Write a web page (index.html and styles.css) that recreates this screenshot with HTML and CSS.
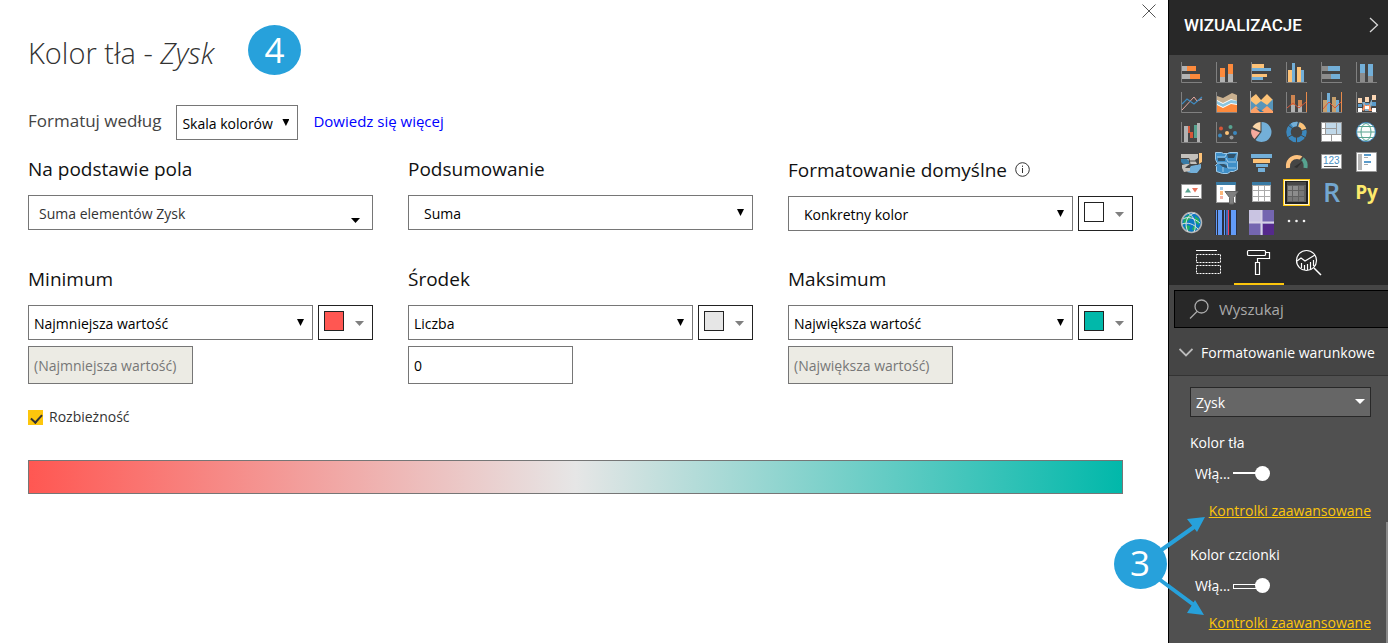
FILE: index.html
```html
<!DOCTYPE html>
<html lang="pl">
<head>
    <meta charset="UTF-8">
    <meta name="viewport" content="width=device-width, initial-scale=1">
    <title>Kolor tła - Zysk</title>
    <link rel="stylesheet" href="styles.css">
</head>
<body>
    <main class="dialog">
        <button class="close" aria-label="Zamknij">
            <svg width="14" height="14" viewBox="0 0 14 14"><path d="M0.5 0.5l13 13M13.5 0.5l-13 13" stroke="#555" fill="none"/></svg>
        </button>

        <div class="title-row">
            <h1>Kolor tła - <em>Zysk</em></h1>
            <span class="badge">4</span>
        </div>

        <div class="format-row">
            <label for="formatBy">Formatuj według</label>
            <div class="select">
                <select id="formatBy"><option>Skala kolorów</option></select>
            </div>
            <a href="#">Dowiedz się więcej</a>
        </div>

        <div class="fields">
            <div class="field">
                <label for="basedOn">Na podstawie pola</label>
                <div class="control">
                    <div class="select field-select">
                        <select id="basedOn"><option>Suma elementów Zysk</option></select>
                    </div>
                </div>
            </div>
            <div class="field">
                <label for="summary">Podsumowanie</label>
                <div class="control">
                    <div class="select indent">
                        <select id="summary"><option>Suma</option></select>
                    </div>
                </div>
            </div>
            <div class="field">
                <div class="label-row">
                    <label for="defaultFormat">Formatowanie domyślne</label>
                    <svg width="15" height="15" viewBox="0 0 15 15"><circle cx="7.5" cy="7.5" r="6.8" fill="none" stroke="#333"/><path d="M7.5 6v5M7.5 3.6v1.3" stroke="#333"/></svg>
                </div>
                <div class="control">
                    <div class="select indent">
                        <select id="defaultFormat"><option>Konkretny kolor</option></select>
                    </div>
                    <button class="color" aria-label="Kolor domyślny"><span class="swatch white"></span></button>
                </div>
            </div>

            <div class="field">
                <label for="minType">Minimum</label>
                <div class="control">
                    <div class="select">
                        <select id="minType"><option>Najmniejsza wartość</option></select>
                    </div>
                    <button class="color" aria-label="Kolor minimum"><span class="swatch red"></span></button>
                </div>
                <input class="value" type="text" aria-label="Wartość minimum" value="(Najmniejsza wartość)" disabled>
            </div>
            <div class="field">
                <label for="midType">Środek</label>
                <div class="control">
                    <div class="select">
                        <select id="midType"><option>Liczba</option></select>
                    </div>
                    <button class="color" aria-label="Kolor środka"><span class="swatch grey"></span></button>
                </div>
                <input class="value" type="text" aria-label="Wartość środka" value="0">
            </div>
            <div class="field">
                <label for="maxType">Maksimum</label>
                <div class="control">
                    <div class="select">
                        <select id="maxType"><option>Największa wartość</option></select>
                    </div>
                    <button class="color" aria-label="Kolor maksimum"><span class="swatch teal"></span></button>
                </div>
                <input class="value" type="text" aria-label="Wartość maksimum" value="(Największa wartość)" disabled>
            </div>
        </div>

        <label class="diverging"><input type="checkbox" checked> Rozbieżność</label>

        <div class="gradient"></div>
    </main>

    <aside class="panel">
        <header class="panel-header">
            <h2>WIZUALIZACJE</h2>
            <button aria-label="Zwiń">
                <svg width="10" height="16" viewBox="0 0 10 16"><path d="M1 1l7.5 7L1 15" fill="none" stroke="#d8d8d8" stroke-width="1.3"/></svg>
            </button>
        </header>

        <div class="visuals">
            <!-- row 1: bar and column charts -->
            <button aria-label="Skumulowany wykres słupkowy"><svg viewBox="0 0 35 30"><path d="M7.5 5v20.5H28" fill="none" stroke="#808080"/><path d="M8 9h5v5H8zM8 17h8v5H8z" fill="#b3b3b3"/><path d="M13 9h9v5h-9zM16 17h10v5H16z" fill="#fd8a3c"/></svg></button>
            <button aria-label="Skumulowany wykres kolumnowy"><svg viewBox="0 0 35 30"><path d="M7.5 5v20.5H28" fill="none" stroke="#808080"/><path d="M11 20h5v5h-5zM19 17h5v8h-5z" fill="#b3b3b3"/><path d="M11 11h5v9h-5zM19 7h5v10h-5z" fill="#fd8a3c"/></svg></button>
            <button aria-label="Grupowany wykres słupkowy"><svg viewBox="0 0 35 30"><path d="M7.5 5v20.5H28" fill="none" stroke="#808080"/><path d="M8 7h12v4H8zM8 17h15v3H8z" fill="#fdc277"/><path d="M8 11h19v3H8zM8 20h11v3H8z" fill="#73afd8"/></svg></button>
            <button aria-label="Grupowany wykres kolumnowy"><svg viewBox="0 0 35 30"><path d="M7.5 5v20.5H28" fill="none" stroke="#808080"/><path d="M9 13h4v12H9zM18 10h4v15h-4z" fill="#fdc277"/><path d="M13 6h3v19h-3zM22 13h3v12h-3z" fill="#73afd8"/></svg></button>
            <button aria-label="Wykres słupkowy 100%"><svg viewBox="0 0 35 30"><path d="M7.5 5v20.5H28" fill="none" stroke="#808080"/><path d="M8 9h6v5H8zM8 17h9v5H8z" fill="#8c8c8c"/><path d="M14 9h12v5H14zM17 17h9v5h-9z" fill="#73afd8"/></svg></button>
            <button aria-label="Wykres kolumnowy 100%"><svg viewBox="0 0 35 30"><path d="M7.5 5v20.5H28" fill="none" stroke="#808080"/><path d="M11 16h5v9h-5zM19 19h5v6h-5z" fill="#8c8c8c"/><path d="M11 7h5v9h-5zM19 7h5v12h-5z" fill="#73afd8"/></svg></button>

            <!-- row 2: line, area and combo charts -->
            <button aria-label="Wykres liniowy"><svg viewBox="0 0 35 30"><path d="M7.5 5v20.5H28" fill="none" stroke="#808080"/><path d="M8 23l12-13 3 4 5-2" fill="none" stroke="#e8aaa2"/><path d="M8 17l5-5 7 5 8-7" fill="none" stroke="#3f8ac0" stroke-width="1.2"/></svg></button>
            <button aria-label="Wykres warstwowy"><svg viewBox="0 0 35 30"><path d="M7.5 5v20.5H28" fill="none" stroke="#808080"/><path d="M8 9l6 2 9-5 5 2v17H8z" fill="#c9b08f"/><path d="M8 13l6 3 8-4 6 2v10H8z" fill="#fff"/><path d="M8 14l6 3 8-4 6 1v11H8z" fill="#8cc5de"/><path d="M8 17l6 3 8-4 6 1v8H8z" fill="#fff"/><path d="M8 18l6 3 8-4 6 1v7H8z" fill="#fd8a3c"/></svg></button>
            <button aria-label="Wykres warstwowy skumulowany"><svg viewBox="0 0 35 30"><path d="M6.5 4v21.5H29" fill="none" stroke="#aaa"/><path d="M7 11l5-4 5 6 6-6 6 6v9H7z" fill="#fdc277"/><path d="M7 14l5 4 5-4 6 4 6-6v11l-3 2H7z" fill="#5795ba"/><path d="M7 23l5-4 5 5 6-5 6 5v2H7z" fill="#fda066"/><path d="M12 21l4 4h4l-3-2z" fill="#2f78a8"/></svg></button>
            <button aria-label="Wykres liniowy i skumulowany"><svg viewBox="0 0 35 30"><path d="M7.5 5v20.5H28" fill="none" stroke="#808080"/><path d="M12 8h4v10h-4zM19 13h4v6h-4z" fill="#ce8551"/><path d="M12 18h4v7h-4zM19 19h4v6h-4z" fill="#b3b3b3"/><path d="M8 21l6-5 6 5 7-6" fill="none" stroke="#d65638"/><path d="M27.5 5v20" stroke="#e88a4a"/></svg></button>
            <button aria-label="Wykres liniowy i grupowany"><svg viewBox="0 0 35 30"><path d="M7.5 5v20.5H28" fill="none" stroke="#808080"/><path d="M9 13h4v12H9zM18 10h4v15h-4z" fill="#c8a06c"/><path d="M13 6h3v19h-3zM22 13h3v12h-3z" fill="#73afd8"/><path d="M9 22l6-7 6 6 6-6" fill="none" stroke="#d65638"/><path d="M27.5 5v20" stroke="#e88a4a"/></svg></button>
            <button aria-label="Wykres wstążkowy"><svg viewBox="0 0 35 30"><path d="M7.5 5v20.5H28" fill="none" stroke="#808080"/><path d="M13 15h3l3 9h-3zM20 24l-3-1 6-11v6z" fill="#84aeca"/><path d="M13 23l3-7h4l3 8h-3l-3-6-2 6z" fill="#fd9766"/><path d="M9 11h4v5H9zM16 10h4v5h-4zM23 8h4v5h-4z" fill="#fbd6b4"/><path d="M9 21h4v4H9zM16 19h4v3h-4zM23 21h4v4h-4z" fill="#fff"/><path d="M9 17h4v3H9zM16 16h4v2h-4zM23 15h4v4h-4z" fill="#5a9bcb"/></svg></button>

            <!-- row 3: waterfall, scatter, pie, donut, treemap, map -->
            <button aria-label="Wykres kaskadowy"><svg viewBox="0 0 35 30"><path d="M7.5 5v20.5H28" fill="none" stroke="#808080"/><path d="M10 9h4v16h-4zM23 6h3v19h-3z" fill="#b3b3b3"/><path d="M14 9h2v7h-2zM16 15h3v6h-3z" fill="#d65638"/><path d="M20 8h3v13h-3z" fill="#57a390"/></svg></button>
            <button aria-label="Wykres punktowy"><svg viewBox="0 0 35 30"><path d="M7.5 5v20.5H28" fill="none" stroke="#808080"/><circle cx="12" cy="11.500" r="2" fill="#d65638"/><circle cx="21.500" cy="10" r="2" fill="#57a390"/><circle cx="18" cy="16" r="2" fill="#fdc277"/><circle cx="11" cy="18.500" r="2" fill="#3b87bd"/><circle cx="26" cy="16" r="2" fill="#3b87bd"/><circle cx="22.500" cy="20.500" r="2" fill="#999"/></svg></button>
            <button aria-label="Wykres kołowy"><svg viewBox="0 0 35 30"><path d="M17.5 15V5a10 10 0 1 1-6 18z" fill="#73afd8"/><path d="M16.5 14V5a10 10 0 0 0-8 5z" fill="#fbd6a8"/><path d="M16 15.5L7.5 12a10 10 0 0 0 3 10z" fill="#f5a99d"/></svg></button>
            <button aria-label="Wykres pierścieniowy"><svg viewBox="0 0 35 30"><g fill="none" stroke-width="4.500"><circle cx="17.500" cy="15" r="8" stroke="#3b87bd"/><path d="M13 8.400a8 8 0 0 1 6-1.300" stroke="#73afd8"/><path d="M20 7.400a8 8 0 0 1 5.200 5.400" stroke="#fdc277"/></g><path d="M20 3l-2 7M28 12l-7 2M27 21l-5-3M17.500 26v-6M8 21l5-3M9 8l5 4" stroke="#454545"/></svg></button>
            <button aria-label="Mapa drzewa"><svg viewBox="0 0 35 30"><path d="M7 5h21v20H7z" fill="#999"/><path d="M8 6h3v5H8zM8 12h3v5H8zM8 18h9v6H8zM18 18h9v6h-9z" fill="#fff"/><path d="M12 6h10v5H12zM12 12h10v5H12zM23 6h4v11h-4z" fill="#c0d8e9"/></svg></button>
            <button aria-label="Mapa"><svg viewBox="0 0 35 30"><circle cx="17" cy="15" r="9.500" fill="#fbfdfc" stroke="#3b87bd"/><g fill="none" stroke="#57a390"><ellipse cx="17" cy="15" rx="5" ry="8.500"/><path d="M8 15h18M10 9.500h14M10 20.500h14"/></g></svg></button>

            <!-- row 4: filled map, shape map, funnel, gauge, card, multi-row card -->
            <button aria-label="Kartogram"><svg viewBox="0 0 35 30"><path d="M7 7h17v4l-3 2 2 4h-7l-3 2-2 2H8v-3l4-1-5-4z" fill="#c3c0bb"/><path d="M7 12h6l2 2v3H9l-2-2z" fill="#397ba5"/><path d="M17 19l10-2v4l-4 5h-6l-4-1z" fill="#73afd8"/><path d="M8 21h8v3l-6 1z" fill="#c3c0bb"/><path d="M25 6h3v9l-3 2z" fill="#fdc277"/><path d="M7 11.500h8l1 6h8M15 14h8" stroke="#454545" fill="none"/></svg></button>
            <button aria-label="Mapa kształtów"><svg viewBox="0 0 35 30"><path d="M6.500 5.500h6l2 1h4l2-1h8l-1 8 1 1v8l-4 2h-3l-3 2h-5l-6-2v-5l-1-1 2-2-2-4z" fill="#3f8fc8" stroke="#a2cbe8"/><path d="M9 11h7v3H9zM18 7h9l-2 4h-6zM10 17h5l3 2v2l-4-1z" fill="#32536b"/><path d="M8 10h8l2-4M17 11l2 4h8M9 16h9l1 5h8M14 20v5" fill="none" stroke="#a2cbe8"/></svg></button>
            <button aria-label="Lejek"><svg viewBox="0 0 35 30"><path d="M7 7h21v4H7zM12 17h12v3H12zM14 21h7v4h-7z" fill="#73afd8"/><path d="M9 12h17v4H9z" fill="#fdc277"/></svg></button>
            <button aria-label="Miernik"><svg viewBox="0 0 35 30"><g fill="none" stroke-width="4"><path d="M9 21c-1-7 4-11 9-11 2 0 3 0 4 1" stroke="#fdc27f"/><path d="M23.500 12c3 2 3.500 5 3 9" stroke="#57a390"/></g><path d="M15 20l9-6-6 7z" fill="#303030"/></svg></button>
            <button aria-label="Karta"><svg viewBox="0 0 35 30"><path d="M7.5 7.5h20v14h-20z" fill="#fff" stroke="#999"/><text x="9" y="17" font-family="Liberation Sans, sans-serif" font-size="10" fill="#4a90c2">123</text><path d="M10 19.5h14" stroke="#555"/></svg></button>
            <button aria-label="Karta z wieloma wierszami"><svg viewBox="0 0 35 30"><path d="M7.5 5.5h20v19h-20z" fill="#fff" stroke="#999"/><path d="M9 7h4v16H9z" fill="#b5b5b5"/><path d="M15 7h7v2h-7zM15 14h7v2h-7z" fill="#5a9bcb"/><path d="M15 10.5h4M15 17.5h4" stroke="#aaa"/></svg></button>

            <!-- row 5: KPI, slicer, table, matrix, R, Python -->
            <button aria-label="Kluczowy wskaźnik wydajności"><svg viewBox="0 0 35 30"><path d="M7.5 7.5h20v14h-20z" fill="#fff" stroke="#999"/><path d="M11 15.500l3-4.500 3 4.500z" fill="#57a390"/><path d="M18 11h6l-3 4.500z" fill="#e8735c"/><path d="M10 19.5h15" stroke="#777"/></svg></button>
            <button aria-label="Fragmentator"><svg viewBox="0 0 35 30"><path d="M7 5h20v21H7z" fill="#999"/><path d="M8 8h18v17H8z" fill="#fff"/><path d="M7 5h20v3H7z" fill="#397ba5"/><path d="M11 10h3v3h-3z" fill="#a7cbe4"/><path d="M11 14h3v4h-3z" fill="#fdb87a"/><path d="M11 19h3v3h-3z" fill="#f5b5a8"/><path d="M16 14.500h13l-4.500 6V27h-4v-6.500z" fill="#808080" stroke="#666"/></svg></button>
            <button aria-label="Tabela"><svg viewBox="0 0 35 30"><path d="M8 5h19v20H8z" fill="#aaa"/><path d="M8 5h19v3H8z" fill="#397ba5"/><path d="M9 9h5v4H9zM15 9h5v4h-5zM21 9h5v4h-5zM9 14h5v5H9zM15 14h5v5h-5zM21 14h5v5h-5zM9 20h5v4H9zM15 20h5v4h-5zM21 20h5v4h-5z" fill="#fff"/></svg></button>
            <button class="active" aria-label="Macierz"><svg viewBox="0 0 35 30"><path d="M8 5h19v20H8z" fill="#606060"/><path d="M8 5h19v3H8z" fill="#484848"/><path d="M9 9h4v4H9zM9 14h4v5H9zM14 9h5v4h-5zM14 14h5v5h-5z" fill="#8c8c8c"/><path d="M20 9h5v4h-5zM20 14h5v5h-5zM9 20h4v4H9zM14 20h5v4h-5zM20 20h5v4h-5z" fill="#787878"/></svg></button>
            <button class="script-r" aria-label="Wizualizacja skryptu języka R">R</button>
            <button class="script-py" aria-label="Wizualizacja języka Python">Py</button>

            <!-- row 6: custom visuals -->
            <button aria-label="ArcGIS Maps"><svg viewBox="0 0 35 30"><circle cx="17.500" cy="15.500" r="10" fill="#0c78c4" stroke="#b5b5b5" stroke-width="1.500"/><path d="M10 11l6-4 2 3-4 4-5 4zM21 9l4 3v6l-4-3zM12 18l4 1-1 5-4-3zM20 18l3 3-3 3-2-2z" fill="#1fae62"/><g fill="none" stroke="#d7e1e6"><path d="M9 12c5-3 11-1 17 4M8 17c6-2 12 0 16 5M14 6c7 4 9 12 6 19M21 6c-9 2-11 11-7 19"/></g></svg></button>
            <button aria-label="Kod kreskowy"><svg viewBox="0 0 35 30"><path d="M6 3h22v25H6z" fill="#2a2f40"/><path d="M7 3h1v25H7zM9 3h4v25H9zM15 3h1v25h-1zM22 3h5v25h-5z" fill="#629bf8"/><path d="M17 3h2v25h-2z" fill="#4168b5"/><path d="M19 3h1v25h-1z" fill="#f03d5b"/></svg></button>
            <button aria-label="Macierz ćwiartek"><svg viewBox="0 0 35 30"><path d="M5 3h25v25H5z" fill="#7466b0"/><path d="M5 3h12v12H5z" fill="#c9c4e2"/><path d="M19 17h11v11H19z" fill="#552a8c"/><path d="M17.5 3v25M5 15.5h25" stroke="#d6d1e6" stroke-width="2"/></svg></button>
            <button aria-label="Więcej"><svg viewBox="0 0 35 30"><g fill="#f2f2f2"><circle cx="10" cy="14" r="1.300"/><circle cx="17.500" cy="14" r="1.300"/><circle cx="25" cy="14" r="1.300"/></g></svg></button>
        </div>

        <nav class="tabs">
            <button aria-label="Pola"><svg width="50" height="45" viewBox="0 0 50 45"><g fill="none" stroke="#fff"><path d="M12 10.5h21"/><path d="M12.5 14.5h24v8h-24zM12.5 25.5h24v8h-24z" stroke-dasharray="2 1"/></g></svg></button>
            <button class="active" aria-label="Formatowanie"><svg width="50" height="45" viewBox="0 0 50 45"><g fill="none" stroke="#fff" stroke-width="1.200"><rect x="13.500" y="10.500" width="18" height="5" rx="1"/><path d="M32 12.5h3.500v6h-12v4"/><path d="M21.5 22.500h4v12h-4z"/></g></svg></button>
            <button aria-label="Analiza"><svg width="50" height="45" viewBox="0 0 50 45"><g fill="none" stroke="#fff" stroke-width="1.200"><circle cx="22.500" cy="20.500" r="10"/><path d="M30 28l7 7" stroke-width="1.500"/><path d="M13 21l4-3 4 3 10-6"/><path d="M17.5 23v5M20.5 25v5M23.5 24v6M26.5 22v7M29.5 20v6"/></g></svg></button>
        </nav>

        <label class="search">
            <svg width="20" height="20" viewBox="0 0 20 20"><g fill="none" stroke="#aaa" stroke-width="1.300"><circle cx="12.500" cy="7.500" r="6.500"/><path d="M8 12.500L1 19.500"/></g></svg>
            <input type="text" placeholder="Wyszukaj" aria-label="Wyszukaj">
        </label>

        <button class="section">
            <svg width="14" height="9" viewBox="0 0 14 9"><path d="M0.5 1L7 7.500 13.500 1" fill="none" stroke="#bbb" stroke-width="1.800"/></svg>
            Formatowanie warunkowe
        </button>

        <div class="section-body">
            <div class="select series">
                <select aria-label="Pole"><option>Zysk</option></select>
            </div>
            <div class="option">
                <h3>Kolor tła</h3>
                <label class="toggle">Włą...<input type="checkbox" checked></label>
                <a href="#">Kontrolki zaawansowane</a>
            </div>
            <div class="option">
                <h3>Kolor czcionki</h3>
                <label class="toggle hollow">Włą...<input type="checkbox" checked></label>
                <a href="#">Kontrolki zaawansowane</a>
            </div>
            <!-- step marker with an arrow to each link -->
            <svg class="callout" width="92" height="104" viewBox="0 0 92 104">
                <g stroke="#27a1db" stroke-width="4"><path d="M26 51L80 13M26 51L80 91"/></g>
                <path d="M91 3L83 18 73 5zM90 101L73 99 81 86z" fill="#27a1db"/>
                <ellipse cx="26.500" cy="50" rx="26.500" ry="25" fill="#27a1db"/>
                <text x="26" y="62" text-anchor="middle">3</text>
            </svg>
            <div class="scrollbar"></div>
        </div>
    </aside>
</body>
</html>
```

FILE: styles.css
```css
* {
    box-sizing: border-box;
}

body {
    margin: 0;
    min-height: 100vh;
    display: flex;
    background-color: #fff;
    color: #000;
    font-family: "Open Sans", "Noto Sans", sans-serif;
    font-size: 14px;
    overflow-x: hidden;
}

h1, h2, h3 {
    margin: 0;
    font-weight: 400;
}

button {
    padding: 0;
    border: none;
    background: none;
    font-family: inherit;
    cursor: pointer;
}

svg {
    display: block;
}

/* dialog */
.dialog {
    flex: 1;
    min-width: 0;
    position: relative;
    padding: 24px 35px 24px 28px;
}

.close {
    position: absolute;
    top: 4px;
    right: 12px;
}

.title-row {
    display: flex;
    align-items: flex-start;
    gap: 34px;
    height: 81px;
}

h1 {
    font-size: 29px;
    line-height: 58px;
    font-weight: 300;
    color: #333;
}

.badge {
    width: 53px;
    height: 50px;
    margin-top: 1px;
    border-radius: 50%;
    background-color: #27a1db;
    color: #fff;
    font-size: 35px;
    line-height: 49px;
    text-align: center;
}

.format-row {
    display: flex;
    gap: 15px;
    height: 35px;
    line-height: 32px;
}

.format-row label {
    font-size: 17px;
    color: #444;
}

.format-row .select {
    flex: none;
    width: 122px;
}

.format-row a {
    color: #00f;
    font-size: 15px;
    text-decoration: none;
}

/* selects share one arrow drawn by the wrapper */
.select {
    flex: 1;
    min-width: 0;
    position: relative;
}

.select select {
    display: block;
    width: 100%;
    height: 35px;
    padding: 2px 5px 0;
    appearance: none;
    border: 1px solid #767676;
    border-radius: 0;
    background-color: #fff;
    color: #000;
    font-family: inherit;
    font-size: 14px;
}

.select::after {
    content: "";
    position: absolute;
    top: 14px;
    right: 9px;
    width: 7px;
    height: 7px;
    background-color: #000;
    clip-path: polygon(0 0, 100% 0, 50% 100%);
    pointer-events: none;
}

.indent select {
    padding-left: 15px;
}

.field-select select {
    padding-left: 10px;
    color: #333;
}

.field-select::after {
    top: 23px;
    right: 13px;
    width: 9px;
    height: 5px;
}

.fields {
    display: grid;
    grid-template-columns: repeat(3, 1fr);
    gap: 34px 35px;
    padding-top: 15px;
}

.field label {
    display: block;
    font-size: 19px;
    line-height: 28px;
    color: #111;
}

.label-row {
    display: flex;
    align-items: center;
    gap: 8px;
    height: 29px;
}

.control {
    display: flex;
    gap: 5px;
    margin-top: 12px;
}

.color {
    width: 55px;
    height: 35px;
    display: flex;
    align-items: center;
    justify-content: space-between;
    padding: 0 8px 3px 5px;
    border: 1px solid #222;
}

.color::after {
    content: "";
    width: 9px;
    height: 5px;
    margin-top: 5px;
    background-color: #808080;
    clip-path: polygon(0 0, 100% 0, 50% 100%);
}

.swatch {
    width: 20px;
    height: 20px;
    border: 1px solid #222;
}

.white { background-color: #fff; }
.red { background-color: #ff5752; }
.grey { background-color: #e6e6e6; }
.teal { background-color: #01b8aa; }

.value {
    display: block;
    width: 165px;
    height: 38px;
    margin-top: 6px;
    padding: 0 5px;
    border: 1px solid #767676;
    border-radius: 0;
    background-color: #fff;
    font-family: inherit;
    font-size: 14px;
}

.value:disabled {
    background-color: #ecebe4;
    color: #777;
}

.diverging {
    display: flex;
    align-items: center;
    gap: 6px;
    margin-top: 22px;
    line-height: 22px;
    color: #333;
}

.diverging input {
    appearance: none;
    position: relative;
    width: 15px;
    height: 15px;
    margin: 0;
    background-color: #fdc60c;
}

.diverging input:checked::after {
    content: "";
    position: absolute;
    left: 5px;
    top: 2px;
    width: 5px;
    height: 9px;
    border: solid #333;
    border-width: 0 2px 2px 0;
    transform: rotate(42deg);
}

.gradient {
    height: 34px;
    margin: 32px 10px 0 0;
    border: 1px solid #767676;
    background: linear-gradient(to right, #ff5752, #e6e6e6 50%, #01b8aa);
}

/* visualizations panel */
.panel {
    flex: none;
    width: 220px;
    display: flex;
    flex-direction: column;
    border-left: 1px solid #000;
    background-color: #454545;
    color: #fff;
}

.panel-header {
    display: flex;
    align-items: center;
    justify-content: space-between;
    height: 55px;
    padding: 0 9px 6px 15px;
    background-color: #282828;
}

.panel-header h2 {
    font-family: Roboto, sans-serif;
    font-size: 17px;
    font-weight: 500;
}

.visuals {
    display: grid;
    grid-template-columns: repeat(6, 35px);
    grid-auto-rows: 30px;
    height: 185px;
    padding: 2px 0 0 5px;
}

.visuals svg {
    width: 35px;
    height: 30px;
}

.visuals .active {
    justify-self: center;
    align-self: center;
    width: 27px;
    height: 27px;
    display: flex;
    align-items: center;
    justify-content: center;
    border: 1px solid #fdc60c;
    outline: 1px solid #fff3c4;
    outline-offset: -2px;
    background-color: #222;
    overflow: hidden;
}

.visuals .active svg {
    flex: none;
}

.script-r {
    color: #73a7d0;
    font-size: 27px;
    line-height: 30px;
    font-weight: 600;
}

.script-py {
    color: #fdea6c;
    font-size: 19px;
    line-height: 28px;
    font-weight: 700;
}

.tabs {
    display: flex;
    height: 45px;
    padding-left: 15px;
    background-color: #282828;
}

.tabs .active {
    border-bottom: 2px solid #fdc60c;
}

.tabs button {
    height: 45px;
    overflow: hidden;
}

.search {
    display: flex;
    align-items: center;
    gap: 10px;
    height: 38px;
    margin: 5px 0 0 5px;
    padding-left: 14px;
    border: 1px solid #000;
    border-right: none;
    background-color: #282828;
}

.search input {
    flex: 1;
    min-width: 0;
    padding: 0;
    border: none;
    outline: none;
    background: none;
    color: #fff;
    font-family: inherit;
    font-size: 15px;
}

.search input::placeholder {
    color: #aaa;
}

.section {
    display: flex;
    align-items: center;
    gap: 8px;
    height: 48px;
    padding: 2px 0 0 10px;
    border-bottom: 1px solid #333;
    color: #fff;
    font-size: 14px;
    white-space: nowrap;
}

.section-body {
    flex: 1;
    position: relative;
    padding: 11px 17px 8px 21px;
    background-color: #505050;
}

.series select {
    height: 30px;
    padding: 0 5px;
    border-color: #282828;
    background-color: #666;
    color: #fff;
}

.series::after {
    top: 12px;
    right: 6px;
    width: 10px;
    height: 5px;
    background-color: #fff;
}

.option {
    padding-top: 15px;
}

.option h3 {
    font-size: 14px;
    line-height: 22px;
}

.toggle {
    display: flex;
    align-items: center;
    gap: 3px;
    height: 38px;
    padding-left: 5px;
}

.toggle input {
    appearance: none;
    position: relative;
    width: 37px;
    height: 15px;
    margin: 0;
}

.toggle input::before {
    content: "";
    position: absolute;
    left: 0;
    top: 6px;
    width: 24px;
    height: 2px;
    background-color: #fff;
}

.hollow input::before {
    height: 3px;
    border: 1px solid #fff;
    background-color: #505050;
}

.toggle input::after {
    content: "";
    position: absolute;
    right: 0;
    top: 0;
    width: 15px;
    height: 15px;
    border-radius: 50%;
    background-color: #fff;
}

.option a {
    display: block;
    color: #fdc60c;
    line-height: 37px;
    text-align: right;
    white-space: nowrap;
}

.callout {
    position: absolute;
    left: -55px;
    top: 138px;
    pointer-events: none;
}

.callout text {
    fill: #fff;
    font-size: 35px;
}

.scrollbar {
    position: absolute;
    right: 0;
    top: 146px;
    bottom: 0;
    width: 2px;
    background-color: #888;
}
```
